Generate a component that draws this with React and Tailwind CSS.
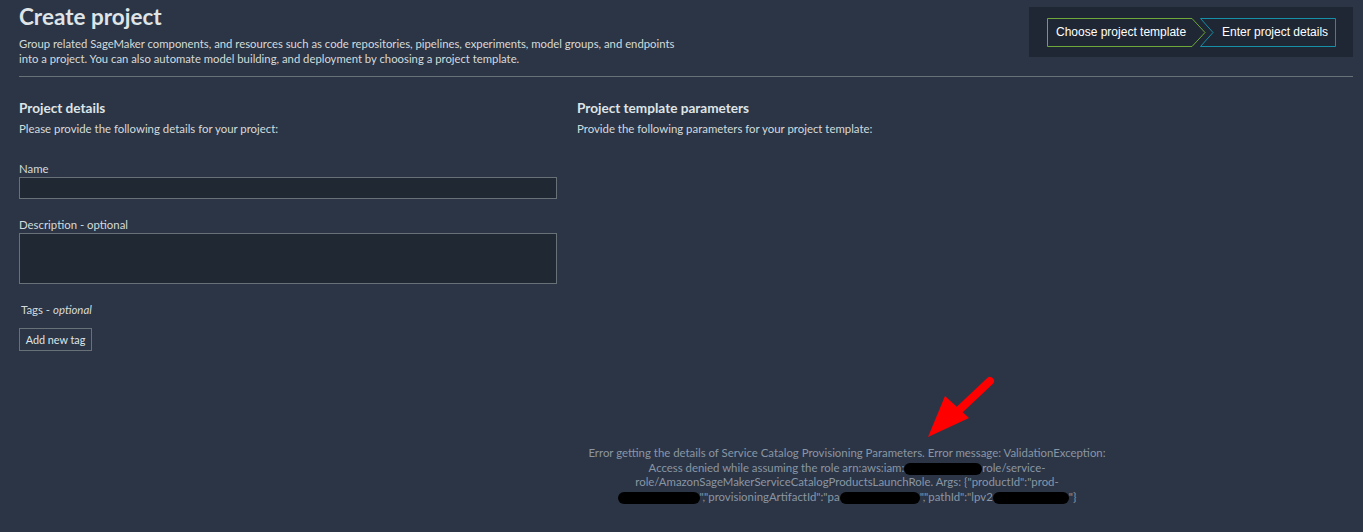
import React from "react";

function Pill({ w }) {
  return (
    <span
      className="inline-block h-[12px] rounded-full bg-black align-middle"
      style={{ width: w }}
    />
  );
}

export default function App() {
  return (
    <div
      className="relative min-h-screen w-full bg-[#2b3546] pl-[19px] pr-[10px] text-[#d5dbdb]"
      style={{ fontFamily: "Lato, 'Open Sans', sans-serif" }}
    >
      {/* Header */}
      <div className="flex items-start justify-between">
        <div className="pt-[3px]">
          <h1 className="text-[22.5px] font-bold leading-[28px] text-[#dfe4e6]">Create project</h1>
          <p className="mt-[5px] text-[11.3px] leading-[15px]">
            Group related SageMaker components, and resources such as code repositories, pipelines, experiments, model groups, and endpoints
            <br />
            into a project. You can also automate model building, and deployment by choosing a project template.
          </p>
        </div>
        <div
          className="mt-[7px] flex h-[50px] w-[324px] items-center bg-[#1e2733] pl-[18px]"
          style={{ fontFamily: "'Liberation Sans', Arial, sans-serif" }}
        >
          <div className="relative flex h-[29px] w-[159px] items-center pl-[9px] text-[12px] text-white">
            <svg className="absolute inset-0" width="159" height="29" viewBox="0 0 159 29">
              <path d="M0.5 0.5 H145 L158 14.5 L145 28.5 H0.5 Z" fill="none" stroke="#6fa83a" strokeWidth="1" />
            </svg>
            <span className="relative">Choose project template</span>
          </div>
          <div className="relative -ml-[6px] flex h-[29px] w-[136px] items-center pl-[22px] text-[12px] text-white">
            <svg className="absolute inset-0" width="136" height="29" viewBox="0 0 136 29">
              <path d="M0.5 0.5 H135.5 V28.5 H0.5 L13 14.5 Z" fill="none" stroke="#1590a8" strokeWidth="1" />
            </svg>
            <span className="relative">Enter project details</span>
          </div>
        </div>
      </div>

      <div className="mt-[10px] h-px w-full bg-[#687078]" />

      {/* Body */}
      <div className="mt-[22px] flex gap-[20px]">
        <div className="w-[538px]">
          <h2 className="text-[13.6px] font-bold leading-[18px] text-[#dfe4e6]">Project details</h2>
          <p className="mt-[5px] text-[11.4px] leading-[14px]">Please provide the following details for your project:</p>

          <label className="mt-[26px] block text-[11.4px] leading-[14px]">Name</label>
          <div className="mt-[1px] h-[22px] w-full border border-[#687078] bg-[#1f2833]" />

          <label className="mt-[19px] block text-[11.4px] leading-[14px]">Description - optional</label>
          <div className="mt-[1px] h-[51px] w-full border border-[#687078] bg-[#1f2833]" />

          <div className="mt-[19px] pl-[2px] text-[11.4px] leading-[14px]">
            Tags - <span className="italic">optional</span>
          </div>
          <button className="mt-[11px] block h-[23px] w-[73px] border border-[#687078] text-[10.8px] leading-[14px] text-[#dfe4e6]">
            Add new tag
          </button>
        </div>

        <div className="w-[540px]">
          <h2 className="text-[13.6px] font-bold leading-[18px] text-[#dfe4e6]">Project template parameters</h2>
          <p className="mt-[5px] text-[11.4px] leading-[14px]">Provide the following parameters for your project template:</p>

          <p className="mt-[310px] whitespace-nowrap text-center text-[11.4px] leading-[14.6px] text-[#8a95a4]">
            Error getting the details of Service Catalog Provisioning Parameters. Error message: ValidationException:
            <br />
            Access denied while assuming the role arn:aws:iam:<Pill w={78} />role/service-
            <br />
            role/AmazonSageMakerServiceCatalogProductsLaunchRole. Args: {"{"}"productId":"prod-
            <br />
            <Pill w={82} />","provisioningArtifactId":"pa<Pill w={80} />","pathId":"lpv2<Pill w={76} />"{"}"}
          </p>
        </div>
      </div>

      {/* Red annotation arrow */}
      <svg className="pointer-events-none absolute left-0 top-0" width="1363" height="532">
        <line x1="990" y1="381" x2="956" y2="413" stroke="#ff0000" strokeWidth="8" strokeLinecap="round" />
        <polygon points="928,437 945,396 969,418" fill="#ff0000" />
      </svg>
    </div>
  );
}
